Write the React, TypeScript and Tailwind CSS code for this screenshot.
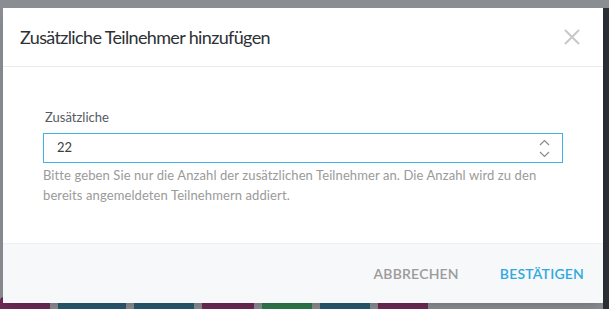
import React, { useState } from 'react';

const pills = [
  { w: 'w-[50px]', c: 'bg-[#6d2a55]' },
  { w: 'w-[68px]', c: 'bg-[#2b5a70]' },
  { w: 'w-[60px]', c: 'bg-[#2b5a70]' },
  { w: 'w-[52px]', c: 'bg-[#6d2a55]' },
  { w: 'w-[50px]', c: 'bg-[#2e7a4c]' },
  { w: 'w-[50px]', c: 'bg-[#2b5a70]' },
  { w: 'w-[50px]', c: 'bg-[#6d2a55]' },
];

// the page under the dialog, dimmed
const Backdrop = () => (
  <div className="absolute inset-0 flex bg-[#8a8d91]">
    <div className="flex-1 flex flex-col justify-end">
      <div className="flex items-end gap-[8px] h-[12px]">
        {pills.map((p, i) => (
          <div key={i} className={`${p.w} ${p.c} h-full rounded-t`} />
        ))}
      </div>
    </div>
    <div className="w-[6px] mt-[8px] bg-[#2b3036]" />
  </div>
);

const Spinner = () => (
  <div className="flex flex-col items-center gap-[5px] pr-[12px]">
    <svg width="11" height="7" viewBox="0 0 11 7" fill="none" stroke="#8a8a8a" strokeWidth="1.2">
      <path d="M1 6 L5.5 1.5 L10 6" />
    </svg>
    <svg width="11" height="7" viewBox="0 0 11 7" fill="none" stroke="#8a8a8a" strokeWidth="1.2">
      <path d="M1 1 L5.5 5.5 L10 1" />
    </svg>
  </div>
);

export default function App() {
  const [value, setValue] = useState('22');

  return (
    <div className="relative w-[609px] h-[309px] overflow-hidden font-['Lato',sans-serif]">
      <Backdrop />
      <div className="absolute left-[3px] top-[8px] w-[600px] h-[295px] bg-white flex flex-col shadow-lg">
        <div className="flex items-center justify-between h-[59px] px-[17px] border-b border-[#ececec]">
          <h2 className="text-[18px] tracking-[-0.65px] text-[#2c3136]">Zusätzliche Teilnehmer hinzufügen</h2>
          <svg width="16" height="16" viewBox="0 0 16 16" stroke="#c8c8c8" strokeWidth="2" className="mr-[6px]">
            <path d="M1 1 L15 15 M15 1 L1 15" />
          </svg>
        </div>
        <div className="flex-1 px-[40px] pt-[42px]">
          <label className="block text-[13px] text-[#555a5f] pl-[2px] mb-[8px] leading-[16px]">Zusätzliche</label>
          <div className="flex items-center h-[30px] border border-[#3db4e2]">
            <input
              value={value}
              onChange={(e) => setValue(e.target.value)}
              className="flex-1 outline-none px-[13px] text-[13px] text-[#3a3f44]"
            />
            <Spinner />
          </div>
          <p className="text-[13px] leading-[20px] text-[#9a9a9a] mt-[2px] tracking-[0.1px]">
            Bitte geben Sie nur die Anzahl der zusätzlichen Teilnehmer an. Die Anzahl wird zu den bereits angemeldeten Teilnehmern addiert.
          </p>
        </div>
        <div className="h-[60px] bg-[#f7f8fa] border-t border-[#eef0f2] flex items-center justify-end gap-[41px] pr-[19px]">
          <button className="text-[14px] font-semibold tracking-[0.2px] text-[#9b9b9b]">ABBRECHEN</button>
          <button className="text-[14px] font-semibold tracking-[0.2px] text-[#2fa9df]">BESTÄTIGEN</button>
        </div>
      </div>
    </div>
  );
}
